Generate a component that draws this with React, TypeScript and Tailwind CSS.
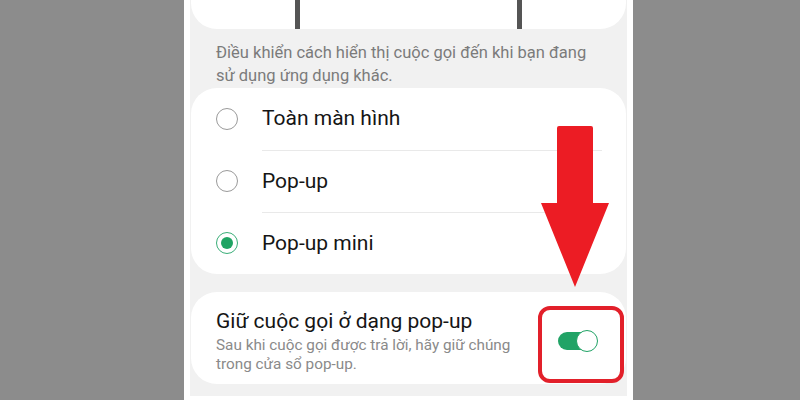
import { useState } from "react";

const OPTIONS = ["Toàn màn hình", "Pop-up", "Pop-up mini"];

function Radio({ checked }: { checked: boolean }) {
  if (checked) {
    return (
      <span className="flex h-[22px] w-[22px] items-center justify-center rounded-full border-[1.5px] border-[#3aae78]">
        <span className="h-[12px] w-[12px] rounded-full bg-[#1fa463]" />
      </span>
    );
  }
  return <span className="h-[22px] w-[22px] rounded-full border-[1.5px] border-[#9a9a9a]" />;
}

function Toggle({ on }: { on: boolean }) {
  return (
    <div className="relative h-[22px] w-[40px]">
      <div className={`absolute left-0 top-[2px] h-[18px] w-[38px] rounded-full ${on ? "bg-[#21a366]" : "bg-[#bdbdbd]"}`} />
      <div className="absolute right-0 top-0 h-[22px] w-[22px] rounded-full border-[1.5px] border-[#21a366] bg-white" />
    </div>
  );
}

export default function App() {
  const [selected, setSelected] = useState(2);

  return (
    <div className="relative h-[400px] w-[800px] overflow-hidden bg-[#8c8c8c] pl-[184px] font-['Roboto',sans-serif]">
      <div className="h-full w-[449px] bg-white px-[6px] pb-[4px]">
        <div className="flex h-full flex-col bg-[#f1f1f1] px-px">
          {/* cut-off card above */}
          <div className="flex h-[29px] shrink-0 rounded-b-[26px] bg-white pl-[104px]">
            <div className="h-full w-[227px] border-x-[5px] border-[#555555]" />
          </div>

          <p className="mt-[12px] whitespace-nowrap px-[25px] text-[16.5px] leading-[23px] text-[#7b7b7b]">
            Điều khiển cách hiển thị cuộc gọi đến khi bạn đang
            <br />
            sử dụng ứng dụng khác.
          </p>

          <div className="mt-px rounded-[26px] bg-white">
            {OPTIONS.map((label, i) => (
              <div key={label} className="flex h-[62px] cursor-pointer items-center" onClick={() => setSelected(i)}>
                <div className="flex w-[71px] shrink-0 justify-center pl-[1px]">
                  <Radio checked={selected === i} />
                </div>
                <div className={`flex h-full flex-1 items-center mr-[24px] ${i > 0 ? "border-t border-[#e9e9e9]" : ""}`}>
                  <span className="text-[21px] text-[#151515]">{label}</span>
                </div>
              </div>
            ))}
          </div>

          <div className="relative mt-[18px] flex items-center rounded-[26px] bg-white pb-[10px] pl-[25px] pr-[28px] pt-[16px]">
            <div className="flex-1">
              <div className="text-[21px] leading-[26px] text-[#151515]">Giữ cuộc gọi ở dạng pop-up</div>
              <div className="mt-[2px] whitespace-nowrap text-[15.3px] leading-[19px] text-[#8a8a8a]">
                Sau khi cuộc gọi được trả lời, hãy giữ chúng
                <br />
                trong cửa sổ pop-up.
              </div>
            </div>
            <Toggle on />
            <div className="absolute left-[347px] top-[14px] h-[77px] w-[86px] rounded-[12px] border-[4px] border-[#e2202a]" />
          </div>
        </div>
      </div>

      <svg className="absolute left-[541px] top-[126px]" width="68" height="162" viewBox="0 0 68 162">
        <path d="M18 0 L50 0 Q52 0 52 2 L52 77 L68 77 L34 161 L0 77 L16 77 L16 2 Q16 0 18 0 Z" fill="#ec1c24" />
      </svg>
    </div>
  );
}
